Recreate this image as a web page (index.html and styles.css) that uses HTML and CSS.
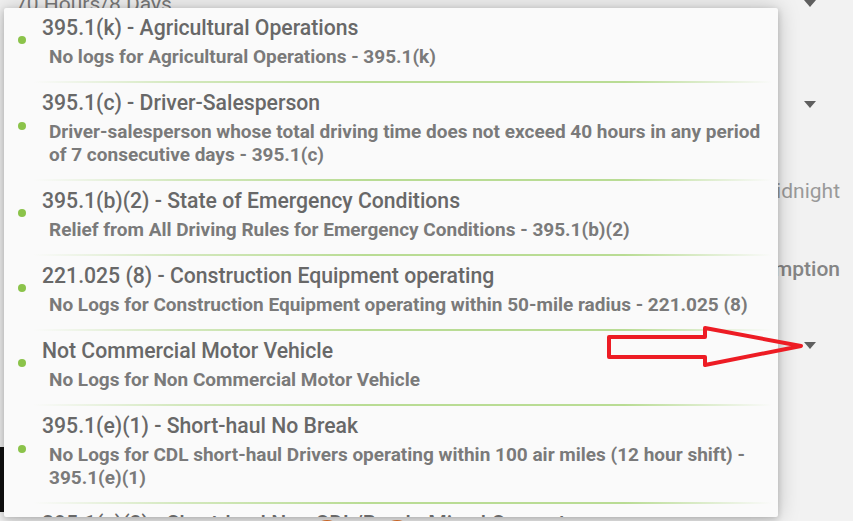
FILE: index.html
```html
<!DOCTYPE html>
<html lang="en">
<head>
<meta charset="UTF-8" />
<title>Exemptions</title>
<link rel="stylesheet" href="styles.css">
</head>
<body>
  <div class="screen">
    <!-- settings form behind the popup -->
    <div class="settings">
      <div class="set-row first">
        <span class="set-label">70 Hours/8 Days</span>
        <span class="caret"></span>
      </div>
      <div class="set-row r2">
        <span class="set-label">Canada South</span>
        <span class="caret"></span>
      </div>
      <div class="set-row r3 text-right">
        <span class="set-value">Midnight</span>
      </div>
      <div class="set-row r4 text-right">
        <span class="set-value strong">Exemption</span>
      </div>
      <div class="set-row r5">
        <span class="set-label">No Exemption</span>
        <span class="caret"></span>
      </div>
      <div class="black-tab"></div>
      <div class="fab-row">
        <span class="fab"></span>
        <span class="fab"></span>
      </div>
    </div>

    <!-- exemption picker popup -->
    <div class="picker">
      <div class="item">
        <span class="dot"></span>
        <div class="item-body">
          <div class="item-title">395.1(k) - Agricultural Operations</div>
          <div class="item-sub">No logs for Agricultural Operations - 395.1(k)</div>
        </div>
      </div>
      <div class="divider"></div>
      <div class="item">
        <span class="dot"></span>
        <div class="item-body">
          <div class="item-title">395.1(c) - Driver-Salesperson</div>
          <div class="item-sub">Driver-salesperson whose total driving time does not exceed 40 hours in any period of 7 consecutive days - 395.1(c)</div>
        </div>
      </div>
      <div class="divider"></div>
      <div class="item">
        <span class="dot"></span>
        <div class="item-body">
          <div class="item-title">395.1(b)(2) - State of Emergency Conditions</div>
          <div class="item-sub">Relief from All Driving Rules for Emergency Conditions - 395.1(b)(2)</div>
        </div>
      </div>
      <div class="divider"></div>
      <div class="item">
        <span class="dot"></span>
        <div class="item-body">
          <div class="item-title">221.025 (8) - Construction Equipment operating</div>
          <div class="item-sub">No Logs for Construction Equipment operating within 50-mile radius - 221.025 (8)</div>
        </div>
      </div>
      <div class="divider"></div>
      <div class="item">
        <span class="dot"></span>
        <div class="item-body">
          <div class="item-title">Not Commercial Motor Vehicle</div>
          <div class="item-sub">No Logs for Non Commercial Motor Vehicle</div>
        </div>
      </div>
      <div class="divider"></div>
      <div class="item">
        <span class="dot"></span>
        <div class="item-body">
          <div class="item-title">395.1(e)(1) - Short-haul No Break</div>
          <div class="item-sub">No Logs for CDL short-haul Drivers operating within 100 air miles (12 hour shift) - 395.1(e)(1)</div>
        </div>
      </div>
      <div class="divider"></div>
      <div class="item">
        <span class="dot"></span>
        <div class="item-body">
          <div class="item-title">395.1(e)(2) - Short-haul Non CDL/Ready-Mixed Concrete</div>
          <div class="item-sub">No Logs for Non CDL short-haul Drivers - 395.1(e)(2)</div>
        </div>
      </div>
    </div>

    <!-- annotation arrow -->
    <svg class="callout" width="853" height="521" viewBox="0 0 853 521">
      <polygon points="609,337 705,337 705,328 801,346 705,365 705,357 609,357"
        fill="none" stroke="#ed1c24" stroke-width="4" stroke-linejoin="round" />
    </svg>
  </div>
</body>
</html>
```

FILE: styles.css
```css
* {
  box-sizing: border-box;
  margin: 0;
  padding: 0;
}
body {
  width: 853px;
  height: 521px;
  overflow: hidden;
  background: #f2f2f2;
  font-family: Roboto, 'Noto Sans', sans-serif;
}
.screen {
  position: relative;
  width: 853px;
  height: 521px;
  overflow: hidden;
  background: #f2f2f2;
}

/* background form */
.settings {
  display: flex;
  flex-direction: column;
}
.set-row {
  display: flex;
  align-items: center;
  justify-content: space-between;
  padding: 0 37px 0 15px;
  height: 101px;
}
.set-row.first {
  margin-top: -47px;
}
.set-row.r3 { height: 71px; }
.set-row.r4 { height: 85px; }
.set-row.r5 { height: 69px; }
.set-row.text-right {
  justify-content: flex-end;
  padding-right: 13px;
}
.set-label {
  font-size: 21px;
  color: #7a7a7a;
}
.set-value {
  font-size: 21px;
  color: #9a9a9a;
}
.set-value.strong {
  color: #858585;
  font-weight: 500;
}
.caret {
  width: 0;
  height: 0;
  border-left: 6px solid transparent;
  border-right: 6px solid transparent;
  border-top: 7px solid #5f5f5f;
}
.black-tab {
  width: 4px;
  height: 65px;
  margin-top: 67px;
  background: #111;
}
.fab-row {
  display: flex;
  gap: 40px;
  margin: 8px 0 0 312px;
}
.fab {
  width: 30px;
  height: 30px;
  border-radius: 50%;
  background: #e8742a;
}

/* popup list */
.picker {
  position: absolute;
  left: 4px;
  top: 8px;
  width: 774px;
  height: 509px;
  overflow: hidden;
  background: #fafafa;
  border-radius: 2px;
  box-shadow: 0 2px 6px rgba(0,0,0,0.18), 0 0 22px rgba(0,0,0,0.22);
}
.item {
  display: flex;
  align-items: center;
  gap: 16px;
  padding: 8px 6px 13px 14px;
}
.dot {
  width: 8px;
  height: 8px;
  border-radius: 50%;
  background: #8bc34a;
  flex-shrink: 0;
  margin-bottom: 5px;
}
.item-body {
  flex: 1;
  min-width: 0;
}
.item-title {
  font-size: 21.2px;
  line-height: 24px;
  font-weight: 500;
  color: #686868;
}
.item-sub {
  margin-top: 5px;
  padding-left: 7px;
  font-size: 19px;
  line-height: 23px;
  font-weight: 700;
  color: #7a7a7a;
}
.divider {
  height: 2px;
  margin: 0 6px 0 29px;
  background: linear-gradient(to right, rgba(197,225,165,0) 0%, #d3e8bd 20%, #b9dc94 45%, #b9dc94 80%, rgba(197,225,165,0) 100%);
}

.callout {
  position: absolute;
  left: 0;
  top: 0;
  pointer-events: none;
}
```
